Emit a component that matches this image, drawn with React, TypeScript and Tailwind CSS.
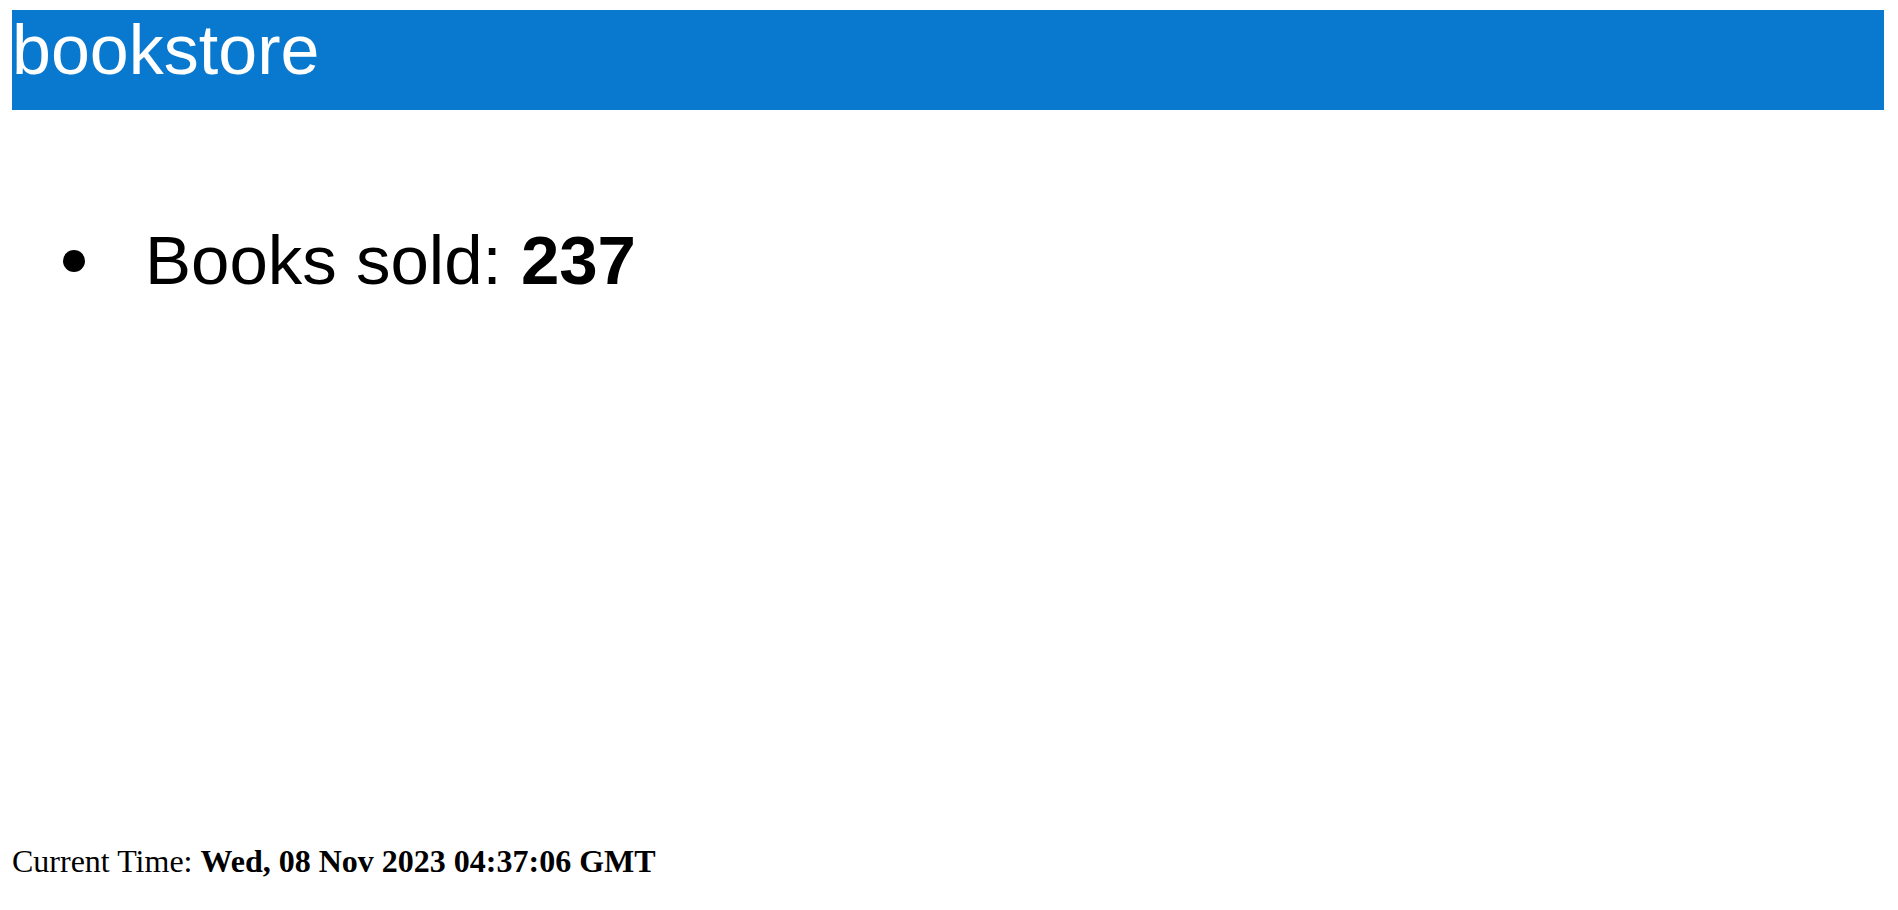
import React from 'react';

const App = () => {
  return (
    <div className="flex min-h-screen flex-col bg-white pl-[12px] pr-[14px] pt-[10px] pb-[30px] text-black">
      {/* Header */}
      <div className="h-[100px] w-full bg-[#0979d0] font-['Liberation_Sans',Arial,sans-serif] text-[70px] leading-[80px] text-white">
        bookstore
      </div>

      {/* Stats */}
      <ul className="mt-[112px] font-['Liberation_Sans',Arial,sans-serif] text-[69px] leading-[78px]">
        <li className="flex items-center">
          <span className="ml-[51px] mr-[60px] h-[22px] w-[22px] rounded-full bg-black" />
          <span>
            Books sold: <b className="font-bold">237</b>
          </span>
        </li>
      </ul>

      {/* Footer */}
      <div className="mt-auto font-['Liberation_Serif','Times_New_Roman',serif] text-[32px] leading-[37px]">
        Current Time: <b className="font-bold">Wed, 08 Nov 2023 04:37:06 GMT</b>
      </div>
    </div>
  );
};

export default App;
